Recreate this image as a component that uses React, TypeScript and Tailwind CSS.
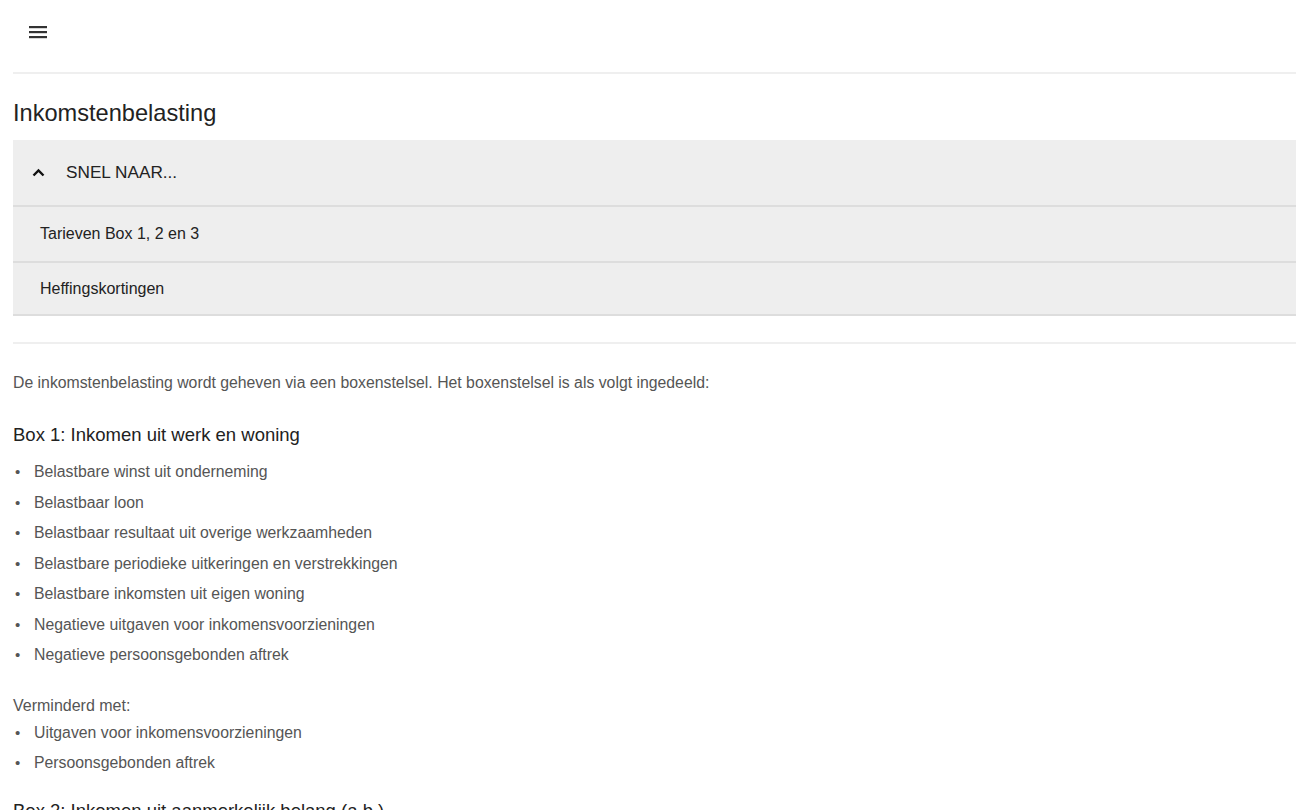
import React from "react";

const box1 = [
  "Belastbare winst uit onderneming",
  "Belastbaar loon",
  "Belastbaar resultaat uit overige werkzaamheden",
  "Belastbare periodieke uitkeringen en verstrekkingen",
  "Belastbare inkomsten uit eigen woning",
  "Negatieve uitgaven voor inkomensvoorzieningen",
  "Negatieve persoonsgebonden aftrek",
];

const minus = ["Uitgaven voor inkomensvoorzieningen", "Persoonsgebonden aftrek"];

function Bullets({ items }: { items: string[] }) {
  return (
    <ul>
      {items.map((t) => (
        <li key={t} className="flex h-[30.5px] items-center text-[15.8px] text-[#555]">
          <span className="w-[21px] pl-[2px] text-[15px] text-[#555]">•</span>
          <span>{t}</span>
        </li>
      ))}
    </ul>
  );
}

export default function App() {
  return (
    <div
      className="h-[810px] overflow-hidden bg-white pl-[13px]"
      style={{ fontFamily: '"Liberation Sans", Arial, sans-serif' }}
    >
      <div className="h-[72px] pl-[16px] pt-[25px]">
        <svg width="18" height="14" viewBox="0 0 18 14">
          <rect x="0" y="1" width="18" height="2.2" fill="#333" />
          <rect x="0" y="6" width="18" height="2.2" fill="#333" />
          <rect x="0" y="11" width="18" height="2.2" fill="#333" />
        </svg>
      </div>
      <div className="h-[2px] bg-[#efefef]" />
      <h1 className="h-[66px] pt-[26px] text-[23.6px] leading-[26px] text-[#222]">Inkomstenbelasting</h1>
      <div className="bg-[#eeeeee] text-[#222]">
        <div className="flex h-[65px] items-center">
          <svg className="ml-[19px]" width="13" height="9" viewBox="0 0 13 9">
            <path d="M1.5 7.5 L6.5 2.5 L11.5 7.5" fill="none" stroke="#111" strokeWidth="2.4" />
          </svg>
          <span className="ml-[21px] text-[17.2px]">SNEL NAAR...</span>
        </div>
        <div className="flex h-[56px] items-center border-t-2 border-[#dddddd] pl-[27px] text-[16px]">
          Tarieven Box 1, 2 en 3
        </div>
        <div className="flex h-[55px] items-center border-t-2 border-b-2 border-[#dddddd] pl-[27px] text-[16px]">
          Heffingskortingen
        </div>
      </div>
      <div className="mt-[26px] h-[2px] bg-[#efefef]" />
      <p className="mt-[29px] text-[15.8px] leading-[20px] text-[#555]">
        De inkomstenbelasting wordt geheven via een boxenstelsel. Het boxenstelsel is als volgt ingedeeld:
      </p>
      <h2 className="mt-[31px] text-[18.5px] leading-[22px] text-[#222]">Box 1: Inkomen uit werk en woning</h2>
      <div className="mt-[11px]">
        <Bullets items={box1} />
      </div>
      <p className="mt-[25px] text-[16px] leading-[20px] text-[#555]">Verminderd met:</p>
      <div className="mt-[2px]">
        <Bullets items={minus} />
      </div>
      <h2 className="mt-[21px] text-[18.5px] leading-[22px] text-[#222]">
        Box 2: Inkomen uit aanmerkelijk belang (a.b.)
      </h2>
    </div>
  );
}
